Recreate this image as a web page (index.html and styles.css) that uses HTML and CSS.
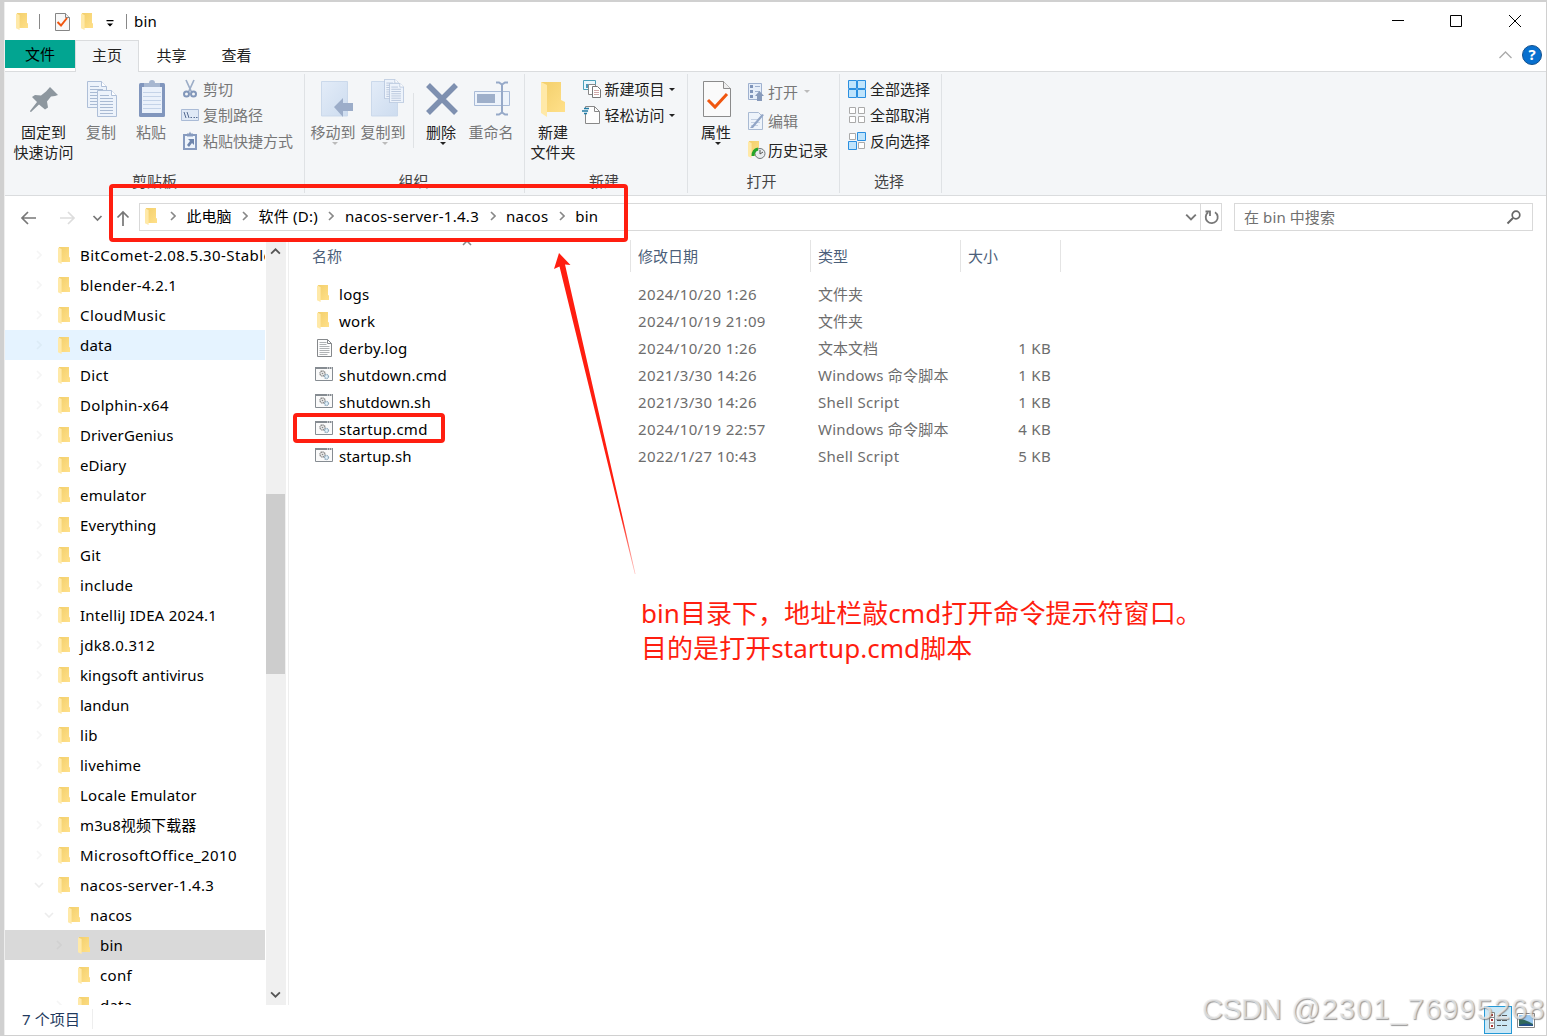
FILE: index.html
```html
<!DOCTYPE html>
<html lang="zh-CN">
<head>
<meta charset="utf-8">
<title>bin</title>
<link rel="stylesheet" href="styles.css">
</head>
<body>
<svg class="defs" width="0" height="0">
  <defs>
    <linearGradient id="gold" x1="0" y1="0" x2="1" y2="1"><stop offset="0" stop-color="#f3cf6b"/><stop offset="1" stop-color="#ffe08a"/></linearGradient>
    <linearGradient id="pale" x1="0" y1="0" x2="1" y2="1"><stop offset="0" stop-color="#e3ecf8"/><stop offset="1" stop-color="#cddcef"/></linearGradient>
    <symbol id="folder" viewBox="0 0 12 17"><path d="M1 0h10v10l1 .5V15H3z" fill="url(#gold)"/><path d="M0 .5 3.6 2v15L0 15.2z" fill="#ffe9a8"/></symbol>
    <symbol id="right" viewBox="0 0 6 10"><path d="M1 1l4 4-4 4" fill="none" stroke="currentColor" stroke-width="1.6"/></symbol>
    <symbol id="down" viewBox="0 0 10 6"><path d="M1 1l4 4 4-4" fill="none" stroke="currentColor" stroke-width="1.6"/></symbol>
    <symbol id="page" viewBox="0 0 20 27"><path d="M.5.5h14l5 5v21H.5z" fill="#edf3fb" stroke="#aebfd8"/><path d="M14.500.5v5h5" fill="#fff" stroke="#aebfd8"/><path d="M3 5.500h9M3 8.500h13M3 11.500h13M3 14.500h13M3 17.500h13M3 20.500h13M3 23.500h13" stroke="#a9bad3"/></symbol>
    <symbol id="script" viewBox="0 0 18 14"><path d="M.5.5h17v13H.5z" fill="#fafafa" stroke="#868c92"/><path d="M0 1h18" stroke="#868c92" stroke-width="2"/><path d="M12 1h1M14 1h1M16 1h1" stroke="#fff"/><circle cx="7.500" cy="6.500" r="2.500" fill="#eee" stroke="#888" stroke-width="1.500" stroke-dasharray="1.300 .6"/><circle cx="7.500" cy="6.500" r=".8" fill="#888"/><circle cx="11.500" cy="9.500" r="2" fill="#e4f2fb" stroke="#8fa9bc" stroke-width="1.300" stroke-dasharray="1.200 .5"/></symbol>
    <symbol id="text" viewBox="0 0 15 18"><path d="M.5.5h10l4 4v13H.5z" fill="#fdfdfd" stroke="#85888b"/><path d="M10.500.5v4h4" fill="none" stroke="#85888b"/><path d="M2.500 3.500h7M2.500 5.500h7M2.500 7.500h10M2.500 9.500h10M2.500 11.500h10M2.500 13.500h10M2.500 15.500h8" stroke="#b0b3b5"/></symbol>
    <symbol id="check" viewBox="0 0 28 36"><path d="M.5.5h20l7 7v28H.5z" fill="#fafafa" stroke="#8b8b8b"/><path d="M20.500.5v7h7" fill="#eee" stroke="#8b8b8b"/><path d="M5 19l7 7L24 13" fill="none" stroke="#f0560f" stroke-width="3"/></symbol>
    <symbol id="check-small" viewBox="0 0 15 18"><path d="M.5.5h10l4 4v13H.5z" fill="#f8f8f8" stroke="#858585"/><path d="M10.500.5v4h4" fill="#eee" stroke="#858585"/><path d="M2.500 9l3.500 3.500L12 5" fill="none" stroke="#f0560f" stroke-width="2"/></symbol>
  </defs>
</svg>
<div class="window">
  <header class="titlebar">
    <svg class="folder"><use href="#folder"/></svg><i class="bar bar-a"></i>
    <svg class="mini-check"><use href="#check-small"/></svg>
    <svg class="folder folder-b"><use href="#folder"/></svg>
    <svg class="quick" viewBox="0 0 8 7"><path d="M.5 0h7v1.200h-7zM1 3.500h6L4 6.500z"/></svg><i class="bar bar-b"></i>
    <span class="title">bin</span>
    <svg class="controls" viewBox="0 0 130 14"><path d="M0 6.500h12M58.500 1.500h11v11h-11zM117 1l12 12M129 1l-12 12" fill="none" stroke="#000"/></svg>
  </header>
  <nav class="tabs">
    <span class="tab file">文件</span><span class="tab active">主页</span><span class="tab">共享</span><span class="tab">查看</span>
    <span class="help"><svg width="13" height="8" viewBox="0 0 13 8"><path d="M.5 7l6-6 6 6" fill="none" stroke="#aaa" stroke-width="1.300"/></svg><b>?</b></span>
  </nav>
  <section class="ribbon">
    <div class="group g-clip">
      <div class="tools">
        <div class="big pin"><svg viewBox="0 0 40 40"><path d="M26 7l8 8-3 1-4 .5-4 5 1 6-3 2-6-5L7 32H6.500l-.5-1 7-9-5-5 3-2 6 .5 5-4z" fill="#8d979f"/></svg><span>固定到<br>快速访问</span></div>
        <div class="big off copy"><svg viewBox="0 0 40 40"><use href="#page" x="6" y="1" width="20" height="27"/><use href="#page" x="16" y="10" width="20" height="27"/></svg><span>复制</span></div>
        <div class="big off paste"><svg viewBox="0 0 40 40"><rect x="8" y="3" width="26" height="34" rx="1.500" fill="#8196bd"/><path d="M11 7h20v26H11z" fill="#eaf1fb"/><path d="M12 12.500h18M12 16.500h18M12 20.500h18M12 24.500h18M12 28.500h18" stroke="#c4d3e8"/><path d="M13 3h5a3 3 0 0 1 6 0h5v4H13z" fill="#a7b7d0"/></svg><span>粘贴</span></div>
        <div class="smalls off">
          <div class="small"><svg viewBox="0 0 18 18"><path d="M4 0l5.500 12M12 0L6.500 12" stroke="#9cadc7" stroke-width="1.700"/><circle cx="4.500" cy="14" r="2.500" fill="none" stroke="#8297ba" stroke-width="2"/><circle cx="11.500" cy="14" r="2.500" fill="none" stroke="#8297ba" stroke-width="2"/></svg>剪切</div>
          <div class="small"><svg viewBox="0 0 18 18"><path d="M-.5 3.500h17v11h-17z" fill="#dfe9f6" stroke="#aabbd6"/><path d="M2 6l2 6M5 6l2 6M8.500 11.500H10M11.500 11.500H13M14 11.500h1.500" stroke="#556b91"/></svg>复制路径</div>
          <div class="small"><svg viewBox="0 0 18 18"><path d="M2 3h12v14H2z" fill="#eff5fc" stroke="#879bbf" stroke-width="2"/><path d="M5 1.500h2l1-2 1 2h2v3H5z" fill="#879bbf"/><path d="M6 7h6v6l-2-2-3 4-2-2 3-4z" fill="#6f86ad"/></svg>粘贴快捷方式</div>
        </div>
      </div><div class="caption">剪贴板</div>
    </div>
    <div class="group g-org">
      <div class="tools">
        <div class="big off"><svg viewBox="0 0 40 40"><path d="M8.500 1.500h26V36h-26z" fill="url(#pale)" stroke="#cbd9eb"/><path d="M21 27l9-9v5h10v8H30v6z" fill="#9cadc9"/></svg><span>移动到</span><i class="arrow"></i></div>
        <div class="big off"><svg viewBox="0 0 40 40"><path d="M8.500 1.500h26V36h-26z" fill="url(#pale)" stroke="#cbd9eb"/><use href="#page" x="21" y="-1" width="15" height="20"/><use href="#page" x="26" y="3" width="15" height="20"/></svg><span>复制到</span><i class="arrow"></i></div>
        <i class="divider"></i>
        <div class="big del"><svg viewBox="0 0 40 40"><path d="M7 5l28 28M35 5L7 33" stroke="#7e90b0" stroke-width="5.500"/></svg><span>删除</span><i class="arrow"></i></div>
        <div class="big off"><svg viewBox="0 0 40 40"><path d="M3.500 11.500h35v14h-35z" fill="#edf3fb" stroke="#a9bbd7"/><path d="M6 14h18v9H6z" fill="#9eafca"/><path d="M25 2.500h3l3 2 3-2h3M31 4v29M25 34.500h3l3-2 3 2h3" fill="none" stroke="#96a9c8" stroke-width="2"/></svg><span>重命名</span></div>
      </div><div class="caption">组织</div>
    </div>
    <div class="group g-new">
      <div class="tools">
        <div class="big newf"><svg viewBox="0 0 40 40"><path d="M8 2h20v18l4 2v10H13z" fill="url(#gold)"/><path d="M8 2l6 3v32l-6-4z" fill="#ffe9a8"/></svg><span>新建<br>文件夹</span></div>
        <div class="smalls">
          <div class="small"><svg viewBox="0 0 18 18"><path d="M.5.5h12v9H.5z" fill="#eaf7fd" stroke="#4ba0b9"/><path d="M3 4h5v4H3z" fill="#4b99ba"/><path d="M5.500 4.500h7v10h-7z" fill="#fff" stroke="#888"/><path d="M9.500 6.500h5l3 3v8h-8z" fill="#fff" stroke="#777"/><path d="M11 10.500h5M11 12.500h5M11 14.500h5" stroke="#d0a8a8"/></svg>新建项目<i class="arrow"></i></div>
          <div class="small"><svg viewBox="0 0 18 18"><path d="M2.500.5h9l5 5v12h-14z" fill="#fdfdfd" stroke="#888"/><path d="M11.500.5v5h5" fill="none" stroke="#888"/><path d="M0 2h6v6H0z" fill="#f4f6f8"/><path d="M1 2.500h5M-1 5h6M1 7.500h3" stroke="#207ca5" stroke-width="1.300"/></svg>轻松访问<i class="arrow"></i></div>
        </div>
      </div><div class="caption">新建</div>
    </div>
    <div class="group g-open">
      <div class="tools">
        <div class="big prop"><svg viewBox="0 0 40 40"><use href="#check" x="7" y="1" width="28" height="36"/></svg><span>属性</span><i class="arrow"></i></div>
        <div class="smalls wide">
          <div class="small off"><svg viewBox="0 0 18 18"><path d="M.5.5h13v16H.5z" fill="#e6eef9" stroke="#9fb1cf"/><path d="M2 2h3v3H2zM2 7h3v3H2zM2 12h3v3H2z" fill="#7f94b9"/><path d="M7 3.500h5M7 8.500h5" stroke="#9fb1cf"/><path d="M7 13l4.500-5 4.500 5h-2v5H9v-5z" fill="#879abb"/></svg>打开<i class="arrow"></i></div>
          <div class="small off"><svg viewBox="0 0 18 18"><path d="M.5.5h10l4 4v13H.5z" fill="#eef4fb" stroke="#a9bad3"/><path d="M3 7.500h9M3 10.500h9M3 13.500h7" stroke="#c4d1e4"/><path d="M2 16L14 2l2 1L5 16z" fill="#91a5c6"/></svg>编辑</div>
          <div class="small"><svg viewBox="0 0 18 18"><use href="#folder" x="0" y="0" width="12" height="17"/><circle cx="12" cy="12.500" r="5" fill="#e9ecee" stroke="#70777b"/><path d="M12 9v4l3-2" fill="none" stroke="#555"/><path d="M10 8q-5 1-5 7" fill="none" stroke="#23a52b" stroke-width="3"/></svg>历史记录</div>
        </div>
      </div><div class="caption">打开</div>
    </div>
    <div class="group g-sel">
      <div class="tools"><div class="smalls">
        <div class="small"><svg viewBox="0 0 18 18"><path d="M.5.5h8v8h-8zM9.500.5h8v8h-8zM.5 9.500h8v8h-8zM9.500 9.500h8v8h-8z" fill="#bfe4fc" stroke="#2a8fe0"/></svg>全部选择</div>
        <div class="small"><svg viewBox="0 0 18 18"><path d="M1.500 1.500h6v6h-6zM10.500 1.500h6v6h-6zM1.500 10.500h6v6h-6zM10.500 10.500h6v6h-6z" fill="#fff" stroke="#aaa"/></svg>全部取消</div>
        <div class="small"><svg viewBox="0 0 18 18"><path d="M1.500 1.500h6v6h-6zM10.500 10.500h6v6h-6z" fill="#fff" stroke="#aaa"/><path d="M9.500.5h8v8h-8zM.5 9.500h8v8h-8z" fill="#bfe4fc" stroke="#2a8fe0"/></svg>反向选择</div>
      </div></div><div class="caption">选择</div>
    </div>
  </section>
  <section class="location">
    <svg class="arrows" viewBox="5 0 134 30"><g fill="none" stroke="#777" stroke-width="1.700"><path d="M22 15h14M28 9l-6 6 6 6"/><path d="M60 15h14M68 9l6 6-6 6" stroke="#ddd"/><path d="M93.500 13l4 4 4-4"/><path d="M123 23V9M117.500 14.500L123 9l5.500 5.500"/></g></svg>
    <div class="address">
      <svg class="folder"><use href="#folder"/></svg>
      <svg class="sep s0"><use href="#right"/></svg><span>此电脑</span>
      <svg class="sep"><use href="#right"/></svg><span class="t2">软件 (D:)</span>
      <svg class="sep"><use href="#right"/></svg><span class="t3">nacos-server-1.4.3</span>
      <svg class="sep"><use href="#right"/></svg><span class="t2">nacos</span>
      <svg class="sep"><use href="#right"/></svg><span class="t2">bin</span>
      <svg class="drop"><use href="#down"/></svg>
      <div class="refresh"><svg viewBox="0 0 16 16"><path d="M11 3.200A6 6 0 1 1 4 3.500M1.500 2.500H6V7" fill="none" stroke="#777" stroke-width="1.800"/></svg></div>
    </div>
    <div class="search"><span class="t1">在 bin 中搜索</span><svg viewBox="0 0 14 14"><circle cx="9" cy="5" r="3.800" fill="none" stroke="#666" stroke-width="1.700"/><path d="M6 8l-5.500 5.500" stroke="#666" stroke-width="2"/></svg></div>
  </section>
  <main>
    <ul class="tree">
      <li class="t4"><svg class="sep"><use href="#right"/></svg><svg class="folder"><use href="#folder"/></svg>BitComet-2.08.5.30-Stable</li>
      <li class="t3"><svg class="sep"><use href="#right"/></svg><svg class="folder"><use href="#folder"/></svg>blender-4.2.1</li>
      <li class="t4"><svg class="sep"><use href="#right"/></svg><svg class="folder"><use href="#folder"/></svg>CloudMusic</li>
      <li class="hover t2"><svg class="sep"><use href="#right"/></svg><svg class="folder"><use href="#folder"/></svg>data</li>
      <li class="t3"><svg class="sep"><use href="#right"/></svg><svg class="folder"><use href="#folder"/></svg>Dict</li>
      <li class="t3"><svg class="sep"><use href="#right"/></svg><svg class="folder"><use href="#folder"/></svg>Dolphin-x64</li>
      <li class="t1"><svg class="sep"><use href="#right"/></svg><svg class="folder"><use href="#folder"/></svg>DriverGenius</li>
      <li class="t1"><svg class="sep"><use href="#right"/></svg><svg class="folder"><use href="#folder"/></svg>eDiary</li>
      <li class="t2"><svg class="sep"><use href="#right"/></svg><svg class="folder"><use href="#folder"/></svg>emulator</li>
      <li class="t1"><svg class="sep"><use href="#right"/></svg><svg class="folder"><use href="#folder"/></svg>Everything</li>
      <li class="t2"><svg class="sep"><use href="#right"/></svg><svg class="folder"><use href="#folder"/></svg>Git</li>
      <li class="t3"><svg class="sep"><use href="#right"/></svg><svg class="folder"><use href="#folder"/></svg>include</li>
      <li class="t2"><svg class="sep"><use href="#right"/></svg><svg class="folder"><use href="#folder"/></svg>IntelliJ IDEA 2024.1</li>
      <li class="t3"><svg class="sep"><use href="#right"/></svg><svg class="folder"><use href="#folder"/></svg>jdk8.0.312</li>
      <li class="t1"><svg class="sep"><use href="#right"/></svg><svg class="folder"><use href="#folder"/></svg>kingsoft antivirus</li>
      <li><svg class="sep"><use href="#right"/></svg><svg class="folder"><use href="#folder"/></svg>landun</li>
      <li class="t3"><svg class="sep"><use href="#right"/></svg><svg class="folder"><use href="#folder"/></svg>lib</li>
      <li class="t2"><svg class="sep"><use href="#right"/></svg><svg class="folder"><use href="#folder"/></svg>livehime</li>
      <li class="t2"><svg class="sep none"></svg><svg class="folder"><use href="#folder"/></svg>Locale Emulator</li>
      <li class="t1"><svg class="sep"><use href="#right"/></svg><svg class="folder"><use href="#folder"/></svg>m3u8视频下载器</li>
      <li class="t4"><svg class="sep"><use href="#right"/></svg><svg class="folder"><use href="#folder"/></svg>MicrosoftOffice_2010</li>
      <li class="t3"><svg class="sep open"><use href="#down"/></svg><svg class="folder"><use href="#folder"/></svg>nacos-server-1.4.3</li>
      <li class="l1 t2"><svg class="sep open"><use href="#down"/></svg><svg class="folder"><use href="#folder"/></svg>nacos</li>
      <li class="l2 current t2"><svg class="sep"><use href="#right"/></svg><svg class="folder"><use href="#folder"/></svg>bin</li>
      <li class="l2 t3"><svg class="sep none"></svg><svg class="folder"><use href="#folder"/></svg>conf</li>
      <li class="l2 t2"><svg class="sep"><use href="#right"/></svg><svg class="folder"><use href="#folder"/></svg>data</li>
    </ul>
    <div class="scroll"><svg class="up"><use href="#down"/></svg><i></i><svg><use href="#down"/></svg></div>
    <div class="files">
      <div class="row head"><span>名称<svg class="sort"><use href="#down"/></svg></span><span>修改日期</span><span>类型</span><span>大小</span></div>
      <div class="row"><span><svg class="folder"><use href="#folder"/></svg>logs</span><span>2024/10/20 1:26</span><span>文件夹</span><span></span></div>
      <div class="row"><span><svg class="folder"><use href="#folder"/></svg>work</span><span>2024/10/19 21:09</span><span>文件夹</span><span></span></div>
      <div class="row"><span><svg class="text"><use href="#text"/></svg>derby.log</span><span>2024/10/20 1:26</span><span>文本文档</span><span>1 KB</span></div>
      <div class="row"><span><svg class="script"><use href="#script"/></svg>shutdown.cmd</span><span>2021/3/30 14:26</span><span class="t2">Windows 命令脚本</span><span>1 KB</span></div>
      <div class="row"><span class="t1"><svg class="script"><use href="#script"/></svg>shutdown.sh</span><span>2021/3/30 14:26</span><span class="t3">Shell Script</span><span>1 KB</span></div>
      <div class="row"><span><svg class="script"><use href="#script"/></svg>startup.cmd</span><span>2024/10/19 22:57</span><span class="t2">Windows 命令脚本</span><span>4 KB</span></div>
      <div class="row"><span class="t1"><svg class="script"><use href="#script"/></svg>startup.sh</span><span>2022/1/27 10:43</span><span class="t3">Shell Script</span><span>5 KB</span></div>
    </div>
  </main>
  <footer><span>7 个项目</span>
    <div class="views"><span class="view on"><svg width="18" height="17" viewBox="0 0 18 17"><path d="M.5.5h5v16h-5zM0 5.500h6M0 11h6" fill="#fff" stroke="#888"/><path d="M2 2h2v2H2zM2 7h2v2H2zM2 13h2v2H2z" fill="#a33"/><path d="M8 3.500h4M13 3.500h5M8 8.500h4M13 8.500h5M8 13.500h4M13 13.500h5" stroke="#555"/></svg></span><span class="view"><svg width="18" height="15" viewBox="0 0 18 15"><path d="M.5.5h17v14H.5z" fill="#fff" stroke="#888"/><path d="M2 2h14v11H2z" fill="#9cc9f2"/><path d="M2 6q6 0 14 5v2H2z" fill="#31685b"/><path d="M2 12q7-3 14 0v1H2z" fill="#244f88"/></svg></span></div>
  </footer>
</div>
<div class="mark mark-path"></div>
<div class="mark mark-file"></div>
<svg class="pointer" viewBox="0 0 90 330"><defs><linearGradient id="fade" x1="0" y1="0" x2="0" y2="1"><stop offset=".82" stop-color="#ff1e10"/><stop offset="1" stop-color="#ff1e10" stop-opacity=".25"/></linearGradient></defs><path d="M9 3L20.500 15 15 14.500 85.500 324 84.800 324 9.500 16.500 4 19z" fill="url(#fade)"/></svg>
<div class="note"><div>bin目录下，地址栏敲cmd打开命令提示符窗口。</div><div>目的是打开startup.cmd脚本</div></div>
<div class="watermark"><span>CSDN</span><span>@2301_76995268</span></div>
</body>
</html>
```
FILE: styles.css
```css
* { box-sizing: border-box; }
body { margin: 0; height: 1036px; overflow: hidden; position: relative; padding: 2px 1px 1px 4px; background: #d0d0d0; font: 15px/20px "Noto Sans", "Noto Sans CJK SC", sans-serif; color: #000; white-space: nowrap; }
svg { flex: none; overflow: visible; }
.defs { position: absolute; }
.t1 { letter-spacing: .1px; }
.t2 { letter-spacing: .22px; }
.t3 { letter-spacing: .3px; }
.t4 { letter-spacing: .4px; }
.window { height: 1033px; background: #fff; border-left: 1px solid #eee; display: flex; flex-direction: column; overflow: hidden; }
.folder { width: 12px; height: 17px; }
.titlebar { height: 38px; flex: none; display: flex; align-items: center; padding-left: 11px; }
.bar { width: 1px; height: 15px; background: #888; }
.bar-a { margin: 0 15px 0 11px; }
.mini-check { width: 15px; height: 18px; margin: 1px 11px 0 0; }
.quick { width: 8px; height: 7px; margin: 4px 12px 0 13px; }
.title { margin: -1px 0 0 7px; letter-spacing: .2px; }
.controls { width: 130px; height: 14px; margin-left: auto; margin-right: 24px; }
.tabs { height: 32px; flex: none; display: flex; border-bottom: 1px solid #dadcde; }
.tab { width: 65px; text-align: center; line-height: 30px; color: #222; }
.tab.file { width: 70px; height: 28px; background: #02a591; color: #000; line-height: 28px; }
.tab.active { width: 64px; height: 32px; border: 1px solid #dadcde; border-bottom: 0; background: #f4f6f8; line-height: 28px; }
.help { display: flex; align-items: center; gap: 10px; margin-left: auto; padding: 0 4px 2px 0; }
.help b { width: 20px; height: 20px; border: 1px solid #15528e; border-radius: 50%; background: #0870cf; color: #fff; text-align: center; line-height: 17px; }
.ribbon { height: 124px; flex: none; display: flex; background: #f4f6f8; border-bottom: 1px solid #dadcde; color: #222; }
.group { display: flex; flex-direction: column; height: 119px; margin-top: 2px; border-right: 1px solid #dfe2e5; }
.tools { display: flex; height: 98px; padding-top: 2px; }
.caption { text-align: center; line-height: 19px; color: #444; padding-right: 2px; }
.g-clip { width: 300px; } .g-org { width: 220px; } .g-new { width: 163px; } .g-open { width: 152px; } .g-sel { width: 102px; }
.g-clip .caption { padding-right: 0; }
.g-new .caption { padding-right: 4px; }
.g-open .caption { padding-right: 4px; }
.g-sel .caption { padding-right: 3px; }
.g-org .tools { padding-left: 3px; }
.big { width: 50px; display: flex; flex-direction: column; align-items: center; text-align: center; padding-top: 4px; }
.big svg { width: 40px; height: 40px; margin-bottom: 2px; }
.off { color: #777; }
.pin { width: 77px; } .newf { width: 56px; }
.copy { width: 38px; } .paste { width: 62px; }
.prop { margin: 0 1px 0 3px; }
.arrow { border: 4px solid transparent; border-top-color: #222; border-bottom: 0; width: 0; height: 0; }
.off .arrow { border-top-color: #bbb; }
.big .arrow { border-width: 3px; border-bottom: 0; margin-left: 3px; }
.divider { width: 1px; height: 55px; background: #dfe2e5; margin: 17px 2px 0 5px; }
.small { height: 26px; display: flex; align-items: center; gap: 3px; }
.small svg { width: 18px; height: 18px; }
.small .arrow { margin-left: 1px; border-width: 3.5px; border-bottom: 0; }
.wide { padding-left: 6px; padding-top: 1px; }
.wide .small { height: 29px; gap: 2px; }
.wide .small .arrow { margin-left: 4px; }
.g-new .smalls { padding-left: 2px; }
.g-new .small, .g-sel .small { gap: 4px; }
.g-new .small { gap: 3.5px; }
.g-sel .tools { padding-left: 8px; }
.location { height: 44px; flex: none; display: flex; align-items: flex-start; padding-top: 7px; }
.arrows { width: 134px; height: 30px; }
.address { width: 1083px; height: 28px; border: 1px solid #d9d9d9; display: flex; align-items: center; padding-left: 5px; }
.address span { padding-bottom: 2px; }
.address .folder { margin-top: -2px; }
.sep { width: 6px; height: 10px; color: #888; margin: 0 10.5px; }
.address .sep { margin-top: -2px; }
.address .s0 { margin-left: 13px; }
.drop { width: 12px; height: 8px; color: #777; margin-left: auto; margin-right: 3px; }
.refresh { width: 21px; height: 26px; flex: none; border-left: 1px solid #d9d9d9; display: flex; align-items: center; justify-content: center; padding-left: 1px; }
.refresh svg { width: 16px; height: 16px; }
.search { width: 299px; height: 28px; margin-left: 12px; border: 1px solid #d9d9d9; padding: 0 11px 0 9px; display: flex; align-items: center; justify-content: space-between; color: #707070; }
.search svg { width: 14px; height: 14px; }
main { display: flex; height: 765px; flex: none; }
.tree { width: 260px; height: 765px; overflow: hidden; list-style: none; margin: 0; padding: 0; }
.tree li { height: 30px; display: flex; align-items: center; padding-left: 31px; }
.tree .sep { margin: 0 16px 0 0; color: #f5f5f5; }
.tree .open { width: 10px; height: 6px; margin: 0 14px 0 -2px; color: #ececec; }
.tree .folder { margin-right: 10px; }
.tree .none { visibility: hidden; }
.tree .l1 { padding-left: 41px; } .tree .l2 { padding-left: 51px; }
.tree .hover { background: #e5f3ff; } .tree .current { background: #d9d9d9; }
.tree .hover .sep { color: #dcebf6; }
.tree .current .sep { color: #d1d1d1; }
.scroll { width: 20px; margin-left: 1px; background: #f0f0f0; display: flex; flex-direction: column; align-items: center; justify-content: space-between; padding: 8px 1px 7px 0; }
.scroll svg { width: 11px; height: 7px; color: #555; }
.up { transform: rotate(180deg); }
.scroll i { width: 19px; height: 180px; background: #cdcdcd; margin-top: -79px; }
.files { margin-left: 2px; border-left: 1px solid #eee; flex: 1; }
.row { display: grid; grid-template-columns: 342px 180px 150px 100px; height: 27px; line-height: 26px; color: #6d6d6d; }
.row > span { padding-left: 7px; }
.row > span:first-child { padding-left: 27px; color: #000; display: flex; align-items: center; }
.row:not(.head) > span:first-child { height: 25px; }
.row:not(.head) > span:first-child:not(.t1) { letter-spacing: .28px; }
.row:not(.head) > span:nth-child(2) { letter-spacing: .36px; }
.row:not(.head) > span:last-child { text-align: right; padding-right: 10px; letter-spacing: .3px; }
.row .folder { margin: -1px 10px 0 1px; }
.row .text { width: 15px; height: 18px; margin: 0 7px 0 1px; }
.row .script { width: 18px; height: 14px; margin: -1px 6px 0 -1px; }
.head { height: 32px; line-height: 32px; margin-bottom: 9px; color: #4c607a; }
.head > span { border-right: 1px solid #e4e4e4; position: relative; }
.row.head > span:first-child { padding-left: 23px; color: #4c607a; }
.sort { position: absolute; left: 173px; top: 0; width: 10px; height: 6px; transform: rotate(180deg); color: #888; }
footer { height: 30px; display: flex; align-items: center; justify-content: space-between; padding-left: 17px; color: #223a5e; }
footer > span { border-right: 1px solid #eee; padding-right: 12px; margin-top: -3px; letter-spacing: .1px; }
.views { display: flex; margin-right: 6px; }
.view { width: 28px; height: 28px; display: flex; align-items: center; justify-content: center; }
.on { border: 1px solid #2499d6; background: #cce8f6; }
.mark { position: absolute; border: 4px solid #ff1e10; border-radius: 4px; }
.mark-path { left: 109px; top: 184px; width: 519px; height: 58px; }
.mark-file { left: 293px; top: 413px; width: 152px; height: 30px; }
.pointer { position: absolute; left: 550px; top: 250px; width: 90px; height: 330px; }
.note { position: absolute; left: 641px; top: 596px; font-size: 26px; line-height: 35px; letter-spacing: .05px; color: #ff1e10; }
.watermark { position: absolute; left: 1202px; top: 989px; display: flex; gap: 10px; font: 29px/40px "Liberation Sans", sans-serif; color: rgba(235, 235, 235, .75); text-shadow: 1px 1px 1px rgba(110, 110, 110, .7); }
.watermark span:first-child { letter-spacing: -.8px; }
.watermark span + span { letter-spacing: 1.1px; }
```
